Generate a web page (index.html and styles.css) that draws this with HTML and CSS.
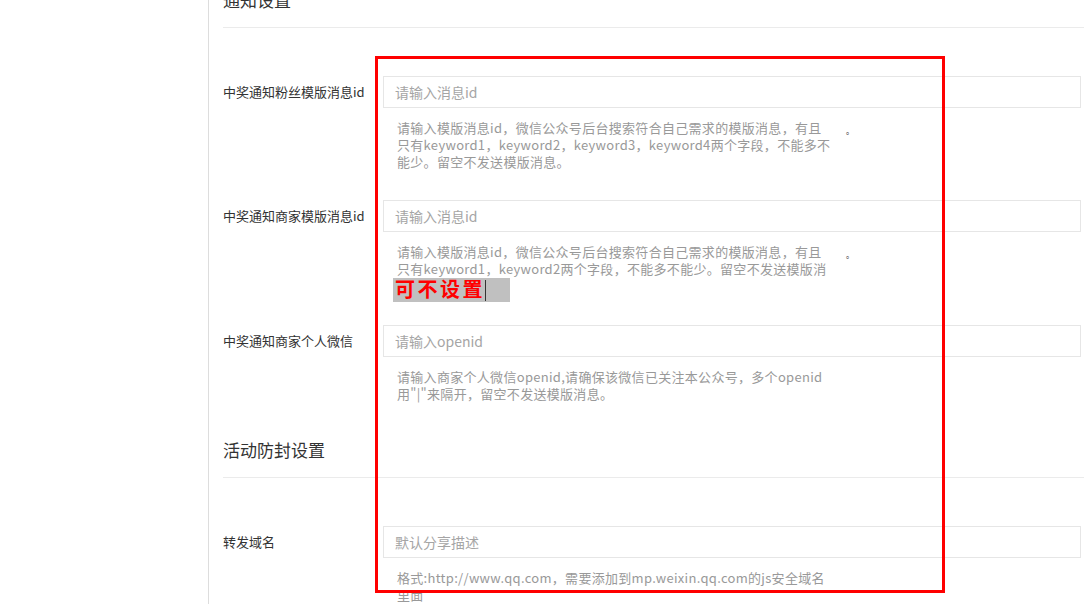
FILE: index.html
```html
<!DOCTYPE html>
<html lang="zh-CN">
<head>
    <meta charset="UTF-8">
    <title>通知设置</title>
    <link rel="stylesheet" href="styles.css">
</head>
<body>
    <div class="sidebar"></div>

    <div class="main">
        <h3 class="section-title">通知设置</h3>

        <div class="form-group">
            <div class="form-row">
                <label for="fansTpl">中奖通知粉丝模版消息id</label>
                <input type="text" id="fansTpl" placeholder="请输入消息id">
            </div>
            <div class="help-row">
                <p class="help">请输入模版消息id，微信公众号后台搜索符合自己需求的模版消息，有且<br>只有keyword1，keyword2，keyword3，keyword4两个字段，不能多不<br>能少。留空不发送模版消息。</p>
                <span class="dot">。</span>
            </div>
        </div>

        <div class="form-group">
            <div class="form-row">
                <label for="shopTpl">中奖通知商家模版消息id</label>
                <input type="text" id="shopTpl" placeholder="请输入消息id">
            </div>
            <div class="help-row">
                <p class="help">请输入模版消息id，微信公众号后台搜索符合自己需求的模版消息，有且<br>只有keyword1，keyword2两个字段，不能多不能少。留空不发送模版消<br>息。</p>
                <span class="dot">。</span>
                <span class="note">可不设置<i class="caret"></i></span>
            </div>
        </div>

        <div class="form-group">
            <div class="form-row">
                <label for="openid">中奖通知商家个人微信</label>
                <input type="text" id="openid" placeholder="请输入openid">
            </div>
            <div class="help-row">
                <p class="help">请输入商家个人微信openid,请确保该微信已关注本公众号，多个openid<br>用"|"来隔开，留空不发送模版消息。</p>
            </div>
        </div>

        <h3 class="section-title">活动防封设置</h3>

        <div class="form-group">
            <div class="form-row">
                <label for="domain">转发域名</label>
                <input type="text" id="domain" placeholder="默认分享描述">
            </div>
            <div class="help-row">
                <p class="help">格式:http://www.qq.com，需要添加到mp.weixin.qq.com的js安全域名<br>里面</p>
            </div>
        </div>
    </div>

    <!-- annotation frame drawn over the screenshot -->
    <div class="mark"></div>
</body>
</html>
```

FILE: styles.css
```css
body {
    margin: 0;
    height: 604px;
    overflow: hidden;
    display: flex;
    background-color: #fff;
    font-family: "Microsoft YaHei", "Noto Sans CJK SC", sans-serif;
    color: #333;
}

.sidebar {
    width: 208px;
    flex-shrink: 0;
}

.main {
    flex: 1;
    border-left: 1px solid #ddd;
    padding-left: 14px;
    margin-top: -12px;
}

.section-title {
    margin: 0;
    padding-bottom: 15px;
    border-bottom: 1px solid #ebebeb;
    font-size: 17px;
    font-weight: normal;
    line-height: 24px;
    color: #333;
}

.form-group + .section-title {
    margin-top: 36px;
}

.section-title + .form-group {
    margin-top: 48px;
}

.form-group {
    margin-bottom: 30px;
}

.form-group:nth-of-type(2) {
    margin-bottom: 31px;
}

.form-row {
    display: flex;
    margin-right: 3px;
}

.form-row label {
    width: 160px;
    flex-shrink: 0;
    font-size: 13px;
    line-height: 32px;
    color: #333;
}

.form-row input {
    flex: 1;
    height: 32px;
    box-sizing: border-box;
    padding: 0 11px;
    border: 1px solid #e6e6e6;
    border-radius: 0;
    outline: none;
    font-family: inherit;
    font-size: 14px;
    color: #555;
}

.form-row input::placeholder {
    color: #a5a5a5;
}

.help-row {
    position: relative;
    display: flex;
    margin: 11px 0 0 174px;
}

.help {
    width: 436px;
    margin: 0;
    font-size: 13px;
    line-height: 17px;
    letter-spacing: 0.3px;
    color: #999;
    white-space: nowrap;
}

.dot {
    margin: 3px 0 0 13px;
    font-size: 8px;
    line-height: 17px;
    color: #333;
}

.note {
    position: absolute;
    left: -4px;
    top: 35px;
    width: 117px;
    height: 24px;
    box-sizing: border-box;
    padding-left: 2px;
    background-color: #c0c0c0;
    font-family: "Liberation Serif", "Noto Sans CJK SC", serif;
    font-size: 20px;
    font-weight: bold;
    letter-spacing: 2.5px;
    line-height: 24px;
    color: #f00;
}

.caret {
    display: inline-block;
    width: 1px;
    height: 21px;
    vertical-align: -4px;
    background-color: #333;
}

.mark {
    position: absolute;
    left: 375px;
    top: 56px;
    width: 570px;
    height: 537px;
    box-sizing: border-box;
    border: 3px solid #f00;
}
```
